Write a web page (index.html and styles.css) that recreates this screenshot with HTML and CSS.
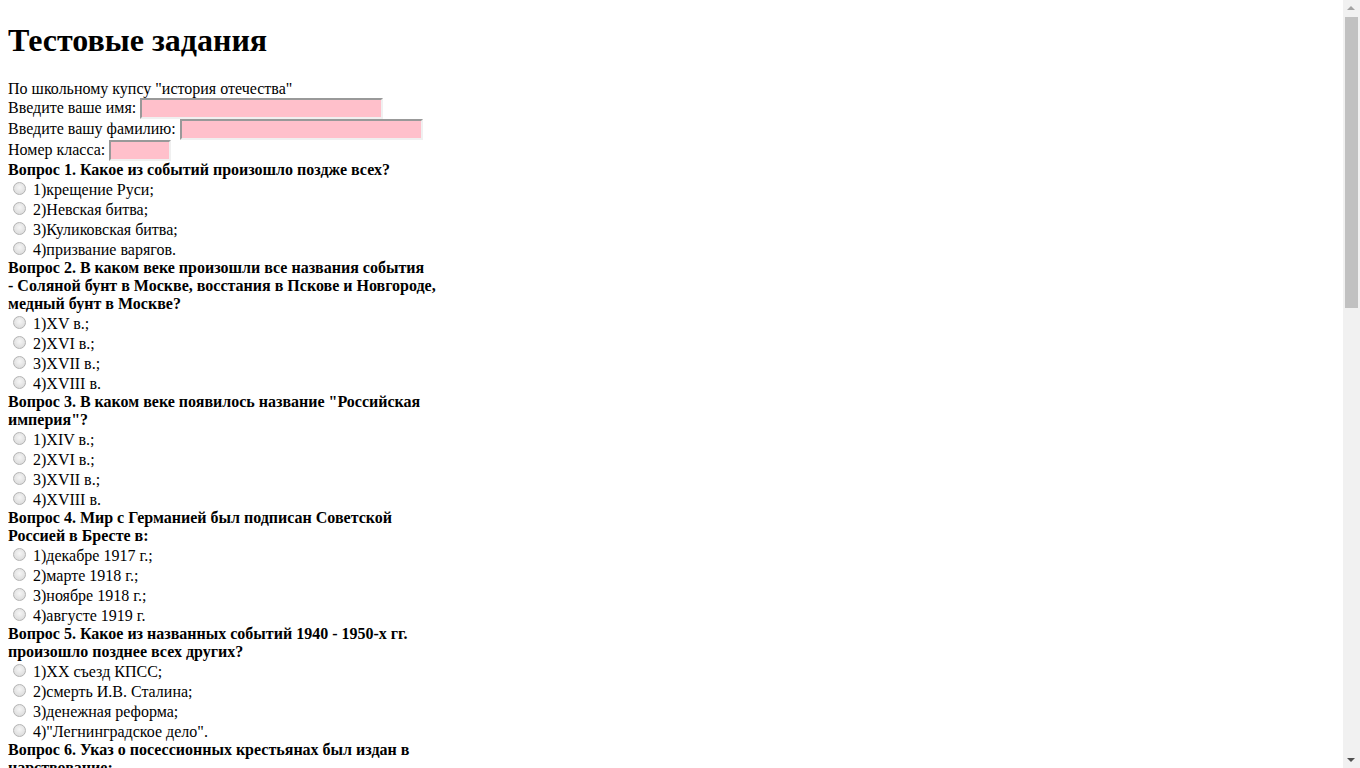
FILE: index.html
```html
<!DOCTYPE html>
<html lang="ru">
<head>
<meta charset="utf-8">
<title>Тестовые задания</title>
<link rel="stylesheet" href="styles.css">
</head>
<body>
<h1 class="title">Тестовые задания</h1>
<form class="quiz">
По школьному купсу "история отечества"<br>
Введите ваше имя: <input class="field field-name" type="text"><br>
Введите вашу фамилию: <input class="field field-name" type="text"><br>
Номер класса: <input class="field field-class" type="text"><br>

<b class="q">Вопрос 1. Какое из событий произошло поздже всех?</b><br>
<input class="opt" type="radio" name="q1"> 1)крещение Руси;<br>
<input class="opt" type="radio" name="q1"> 2)Невская битва;<br>
<input class="opt" type="radio" name="q1"> 3)Куликовская битва;<br>
<input class="opt" type="radio" name="q1"> 4)призвание варягов.<br>

<b class="q">Вопрос 2. В каком веке произошли все названия события<br>- Соляной бунт в Москве, восстания в Пскове и Новгороде, медный бунт в Москве?</b><br>
<input class="opt" type="radio" name="q2"> 1)XV в.;<br>
<input class="opt" type="radio" name="q2"> 2)XVI в.;<br>
<input class="opt" type="radio" name="q2"> 3)XVII в.;<br>
<input class="opt" type="radio" name="q2"> 4)XVIII в.<br>

<b class="q">Вопрос 3. В каком веке появилось название "Российская империя"?</b><br>
<input class="opt" type="radio" name="q3"> 1)XIV в.;<br>
<input class="opt" type="radio" name="q3"> 2)XVI в.;<br>
<input class="opt" type="radio" name="q3"> 3)XVII в.;<br>
<input class="opt" type="radio" name="q3"> 4)XVIII в.<br>

<b class="q">Вопрос 4. Мир с Германией был подписан Советской Россией в Бресте в:</b><br>
<input class="opt" type="radio" name="q4"> 1)декабре 1917 г.;<br>
<input class="opt" type="radio" name="q4"> 2)марте 1918 г.;<br>
<input class="opt" type="radio" name="q4"> 3)ноябре 1918 г.;<br>
<input class="opt" type="radio" name="q4"> 4)августе 1919 г.<br>

<b class="q">Вопрос 5. Какое из названных событий 1940 - 1950-х гг. произошло позднее всех других?</b><br>
<input class="opt" type="radio" name="q5"> 1)XX съезд КПСС;<br>
<input class="opt" type="radio" name="q5"> 2)смерть И.В. Сталина;<br>
<input class="opt" type="radio" name="q5"> 3)денежная реформа;<br>
<input class="opt" type="radio" name="q5"> 4)"Легнинградское дело".<br>

<b class="q">Вопрос 6. Указ о посессионных крестьянах был издан в царствование:</b><br>
<input class="opt" type="radio" name="q6"> 1)Петра I;<br>
<input class="opt" type="radio" name="q6"> 2)Анны Иоанновны;<br>
<input class="opt" type="radio" name="q6"> 3)Елизаветы Петровны;<br>
<input class="opt" type="radio" name="q6"> 4)Екатерины II.<br>

<b class="q">Вопрос 7. В каком году было отменено крепостное право в России?</b><br>
<input class="opt" type="radio" name="q7"> 1)1825 г.;<br>
<input class="opt" type="radio" name="q7"> 2)1861 г.;<br>
<input class="opt" type="radio" name="q7"> 3)1874 г.;<br>
<input class="opt" type="radio" name="q7"> 4)1905 г.<br>

<b class="q">Вопрос 8. Кто из названных лиц был сподвижником Петра I в проведении реформ?</b><br>
<input class="opt" type="radio" name="q8"> 1)А.Д. Меншиков;<br>
<input class="opt" type="radio" name="q8"> 2)А.А. Аракчеев;<br>
<input class="opt" type="radio" name="q8"> 3)Г.А. Потёмкин;<br>
<input class="opt" type="radio" name="q8"> 4)М.М. Сперанский.<br>

<b class="q">Вопрос 9. В каком году состоялось Бородинское сражение с армией Наполеона?</b><br>
<input class="opt" type="radio" name="q9"> 1)1805 г.;<br>
<input class="opt" type="radio" name="q9"> 2)1807 г.;<br>
<input class="opt" type="radio" name="q9"> 3)1812 г.;<br>
<input class="opt" type="radio" name="q9"> 4)1814 г.<br>

<b class="q">Вопрос 10. Какое из названных событий произошло в царствование Ивана IV Грозного?</b><br>
<input class="opt" type="radio" name="q10"> 1)присоединение Казанского ханства;<br>
<input class="opt" type="radio" name="q10"> 2)Смоленская война;<br>
<input class="opt" type="radio" name="q10"> 3)принятие Соборного уложения;<br>
<input class="opt" type="radio" name="q10"> 4)церковный раскол.<br>

<b class="q">Вопрос 11. Первая русская революция началась в:</b><br>
<input class="opt" type="radio" name="q11"> 1)1904 г.;<br>
<input class="opt" type="radio" name="q11"> 2)1905 г.;<br>
<input class="opt" type="radio" name="q11"> 3)1907 г.;<br>
<input class="opt" type="radio" name="q11"> 4)1917 г.<br>

<b class="q">Вопрос 12. Кто из названных лиц был первым царём из династии Романовых?</b><br>
<input class="opt" type="radio" name="q12"> 1)Алексей Михайлович;<br>
<input class="opt" type="radio" name="q12"> 2)Михаил Фёдорович;<br>
<input class="opt" type="radio" name="q12"> 3)Фёдор Алексеевич;<br>
<input class="opt" type="radio" name="q12"> 4)Пётр I.<br>

<b class="q">Вопрос 13. В каком году завершилась Великая Отечественная война?</b><br>
<input class="opt" type="radio" name="q13"> 1)1943 г.;<br>
<input class="opt" type="radio" name="q13"> 2)1944 г.;<br>
<input class="opt" type="radio" name="q13"> 3)1945 г.;<br>
<input class="opt" type="radio" name="q13"> 4)1946 г.<br>

<b class="q">Вопрос 14. Какое событие произошло в 1480 году?</b><br>
<input class="opt" type="radio" name="q14"> 1)Куликовская битва;<br>
<input class="opt" type="radio" name="q14"> 2)стояние на реке Угре;<br>
<input class="opt" type="radio" name="q14"> 3)Ледовое побоище;<br>
<input class="opt" type="radio" name="q14"> 4)взятие Казани.<br>

<b class="q">Вопрос 15. Кто был первым президентом Российской Федерации?</b><br>
<input class="opt" type="radio" name="q15"> 1)М.С. Горбачёв;<br>
<input class="opt" type="radio" name="q15"> 2)Б.Н. Ельцин;<br>
<input class="opt" type="radio" name="q15"> 3)В.В. Путин;<br>
<input class="opt" type="radio" name="q15"> 4)Д.А. Медведев.<br>
</form>

<div class="scrollbar" aria-hidden="true">
  <span class="sb-arrow sb-up"></span>
  <span class="sb-thumb"></span>
  <span class="sb-arrow sb-down"></span>
</div>
</body>
</html>
```
FILE: styles.css
```css
body {
  margin: 0 8px 8px 8px;
  padding: 0;
  font-family: "Liberation Serif", "Times New Roman", serif;
  font-size: 16px;
  color: #000;
  background: #fff;
}

.title {
  font-size: 32px;
  font-weight: bold;
  margin: 22px 0 21px 0;
}

.quiz {
  width: 432px;
  margin: 0;
}

.field {
  box-sizing: border-box;
  height: 21px;
  padding: 1px 2px;
  margin: 0;
  background: pink;
  border-width: 2px;
  border-style: solid;
  border-color: #999 #f0f0f0 #f0f0f0 #999;
  font-size: 13px;
  vertical-align: baseline;
}

.field-name {
  width: 243px;
}

.field-class {
  width: 62px;
}

.q {
  font-weight: bold;
}

.opt {
  -webkit-appearance: none;
  appearance: none;
  box-sizing: border-box;
  width: 13px;
  height: 13px;
  margin: 3px 3px 0 5px;
  border: 1px solid #b4b4b4;
  border-radius: 50%;
  background: radial-gradient(circle at 50% 40%, #f6f6f6 0%, #e4e4e4 55%, #d6d6d6 100%);
  vertical-align: baseline;
}

.scrollbar {
  position: fixed;
  top: 0;
  right: 0;
  width: 17px;
  height: 100vh;
  background: #f1f1f1;
}

.sb-thumb {
  position: absolute;
  top: 17px;
  left: 2px;
  width: 13px;
  height: 291px;
  background: #c1c1c1;
}

.sb-arrow {
  position: absolute;
  left: 4px;
  width: 0;
  height: 0;
  border-left: 4px solid transparent;
  border-right: 4px solid transparent;
}

.sb-up {
  top: 6px;
  border-bottom: 4px solid #a3a3a3;
}

.sb-down {
  bottom: 6px;
  border-top: 4px solid #505050;
}
```
